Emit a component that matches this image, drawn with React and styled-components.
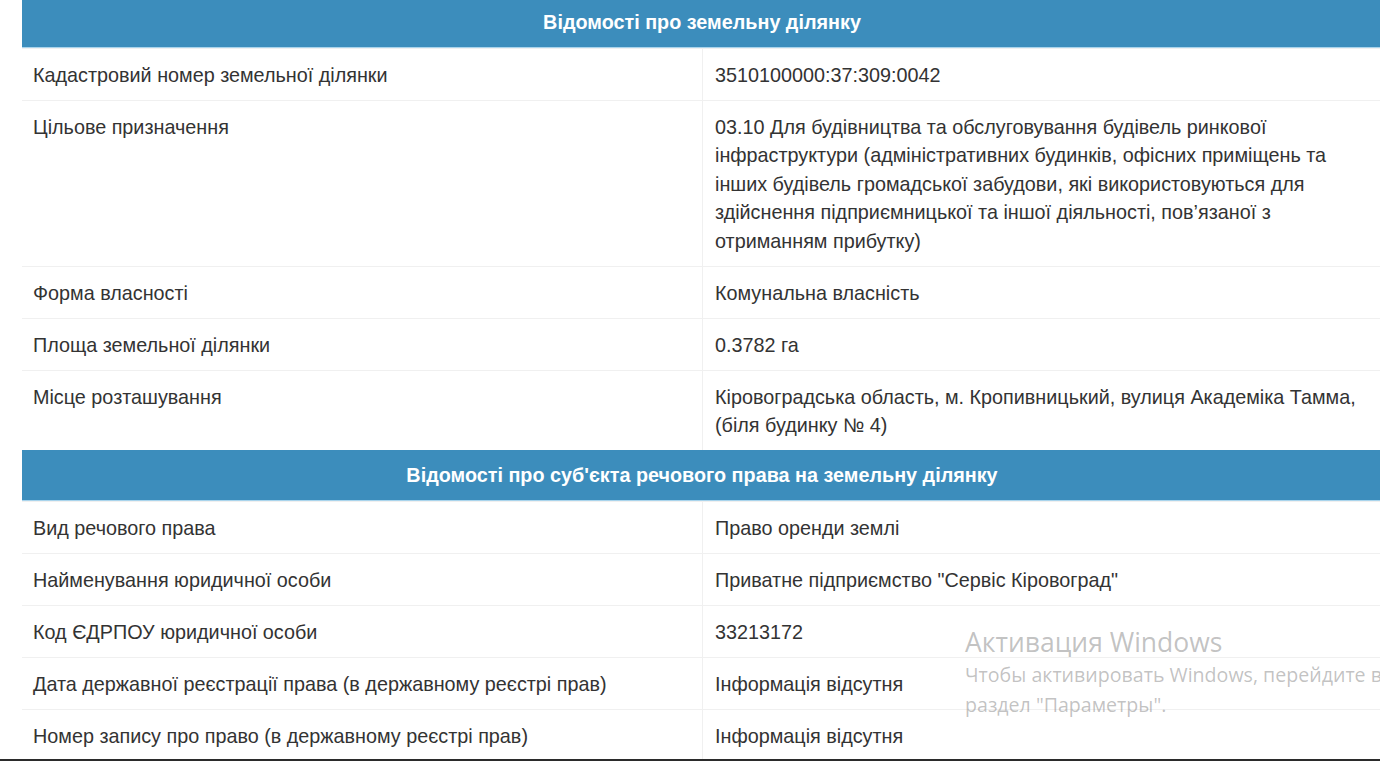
import React from 'react';
import styled, { createGlobalStyle } from 'styled-components';

const GlobalStyle = createGlobalStyle`
  html, body {
    margin: 0;
    padding: 0;
    background: #fff;
  }
  body {
    font-family: "Liberation Sans", Arial, sans-serif;
    color: #333;
  }
`;

const Screen = styled.div`
  position: relative;
  width: 1380px;
  height: 761px;
  overflow: hidden;
  background: #fff;
  border-bottom: 2px solid #2b2b2b;
  box-sizing: border-box;
`;

const Table = styled.div`
  width: 1360px;
  margin: -3px 0 0 22px;
`;

const Header = styled.div`
  background: #3c8dbc;
  color: #fff;
  font-weight: bold;
  font-size: 19.8px;
  line-height: 28px;
  text-align: center;
  padding: 11px 10px 11px;
  border-bottom: 1px solid #a9d4ec;
`;

const Row = styled.div`
  display: grid;
  grid-template-columns: 680px 680px;
  border-top: 1px solid #f0f0f0;
`;

const Cell = styled.div`
  font-size: 19.8px;
  line-height: 28.4px;
  padding: 12px 11px 10.6px;
  color: #333;
  & + & {
    border-left: 1px solid #f0f0f0;
    padding-left: 12px;
  }
`;

const Watermark = styled.div`
  position: absolute;
  left: 965px;
  top: 624px;
  color: rgba(120, 120, 120, 0.45);
  font-family: "Open Sans", "Noto Sans", sans-serif;
  pointer-events: none;
`;

const WatermarkTitle = styled.div`
  font-size: 26.5px;
  line-height: 36px;
`;

const WatermarkText = styled.div`
  font-size: 19.6px;
  line-height: 30px;
  white-space: nowrap;
`;

const sections = [
  {
    title: 'Відомості про земельну ділянку',
    rows: [
      ['Кадастровий номер земельної ділянки', '3510100000:37:309:0042'],
      [
        'Цільове призначення',
        '03.10 Для будівництва та обслуговування будівель ринкової інфраструктури (адміністративних будинків, офісних приміщень та інших будівель громадської забудови, які використовуються для здійснення підприємницької та іншої діяльності, пов’язаної з отриманням прибутку)',
      ],
      ['Форма власності', 'Комунальна власність'],
      ['Площа земельної ділянки', '0.3782 га'],
      ['Місце розташування', 'Кіровоградська область, м. Кропивницький, вулиця Академіка Тамма, (біля будинку № 4)'],
    ],
  },
  {
    title: "Відомості про суб'єкта речового права на земельну ділянку",
    rows: [
      ['Вид речового права', 'Право оренди землі'],
      ['Найменування юридичної особи', 'Приватне підприємство "Сервіс Кіровоград"'],
      ['Код ЄДРПОУ юридичної особи', '33213172'],
      ['Дата державної реєстрації права (в державному реєстрі прав)', 'Інформація відсутня'],
      ['Номер запису про право (в державному реєстрі прав)', 'Інформація відсутня'],
    ],
  },
];

export default function App() {
  return (
    <Screen>
      <GlobalStyle />
      <Table>
        {sections.map((section) => (
          <React.Fragment key={section.title}>
            <Header>{section.title}</Header>
            {section.rows.map(([label, value]) => (
              <Row key={label}>
                <Cell>{label}</Cell>
                <Cell>{value}</Cell>
              </Row>
            ))}
          </React.Fragment>
        ))}
      </Table>
      <Watermark>
        <WatermarkTitle>Активация Windows</WatermarkTitle>
        <WatermarkText>Чтобы активировать Windows, перейдите в</WatermarkText>
        <WatermarkText>раздел "Параметры".</WatermarkText>
      </Watermark>
    </Screen>
  );
}
